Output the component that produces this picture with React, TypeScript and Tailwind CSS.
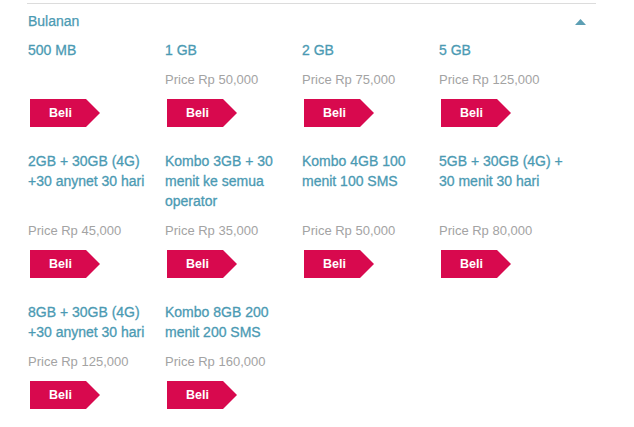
import React from 'react';

interface Plan {
  name: string;
  price?: string;
}

const plans: Plan[] = [
  { name: '500 MB' },
  { name: '1 GB', price: '50,000' },
  { name: '2 GB', price: '75,000' },
  { name: '5 GB', price: '125,000' },
  { name: '2GB + 30GB (4G) +30 anynet 30 hari', price: '45,000' },
  { name: 'Kombo 3GB + 30 menit ke semua operator', price: '35,000' },
  { name: 'Kombo 4GB 100 menit 100 SMS', price: '50,000' },
  { name: '5GB + 30GB (4G) + 30 menit 30 hari', price: '80,000' },
  { name: '8GB + 30GB (4G) +30 anynet 30 hari', price: '125,000' },
  { name: 'Kombo 8GB 200 menit 200 SMS', price: '160,000' },
];

function BuyButton() {
  return (
    <button
      className="ml-[2px] h-[28px] w-[70px] bg-[#d8094e] text-left pl-[19px] text-[12.5px] font-bold text-white"
      style={{ clipPath: 'polygon(0 0, 56px 0, 70px 50%, 56px 100%, 0 100%)' }}
    >
      Beli
    </button>
  );
}

export default function App() {
  return (
    <div className="w-[634px] h-[427px] bg-white pt-[3px] font-['Liberation_Sans',Arial,sans-serif]">
      <div className="ml-[27px] w-[569px] border-t border-[#dcdcdc]">
        {/* Header */}
        <div className="flex items-center justify-between pl-[1px] pr-[10px] pt-[7px]">
          <span className="text-[14px] leading-[20px] text-[#4b9ab3] [-webkit-text-stroke:0.25px_#4b9ab3]">
            Bulanan
          </span>
          <svg width="11" height="6" viewBox="0 0 11 6" className="mt-[1px]">
            <polygon points="0,6 5.5,0 11,6" fill="#5d9fb4" />
          </svg>
        </div>

        {/* Plans */}
        <div className="mt-[9px] pl-[1px] grid grid-cols-[repeat(4,137px)] gap-y-[24px]">
          {plans.map((p) => (
            <div key={p.name} className="flex flex-col pr-[8px]">
              <h3 className="flex-1 text-[14px] leading-[20px] text-[#4b9ab3] [-webkit-text-stroke:0.3px_#4b9ab3]">
                {p.name}
              </h3>
              <p className="mt-[10px] h-[20px] text-[13px] leading-[20px] text-[#a3a3a3]">
                {p.price ? `Price Rp ${p.price}` : ''}
              </p>
              <div className="mt-[9px]">
                <BuyButton />
              </div>
            </div>
          ))}
        </div>
      </div>
    </div>
  );
}
